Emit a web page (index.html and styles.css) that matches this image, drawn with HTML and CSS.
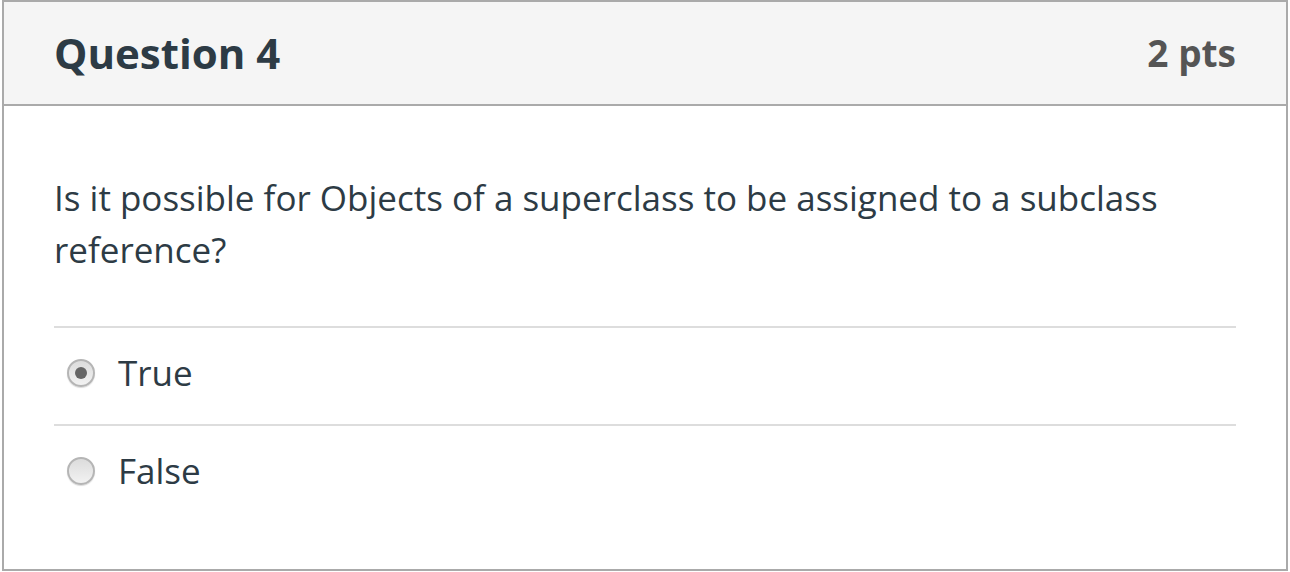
FILE: index.html
```html
<!DOCTYPE html>
<html>
<head>
<meta charset="utf-8">
<link rel="stylesheet" href="styles.css">
</head>
<body>
<div class="question">
  <div class="q-header">
    <h2 class="q-title">Question 4</h2>
    <span class="q-points">2 pts</span>
  </div>
  <div class="q-body">
    <p class="q-text">Is it possible for Objects of a superclass to be assigned to a subclass reference?</p>
    <div class="answers">
      <label class="answer">
        <span class="radio checked"></span>
        <span class="answer-label">True</span>
      </label>
      <label class="answer">
        <span class="radio"></span>
        <span class="answer-label">False</span>
      </label>
    </div>
  </div>
</div>
</body>
</html>
```
FILE: styles.css
```css
html, body {
  margin: 0;
  padding: 0;
  background: #fff;
}
body {
  padding: 0 2px;
  font-family: "Open Sans", "Liberation Sans", sans-serif;
  color: #2d3b45;
}
.question {
  border: 2px solid #aaaaaa;
  height: 571px;
  box-sizing: border-box;
  display: flex;
  flex-direction: column;
}
.q-header {
  background: #f5f5f5;
  border-bottom: 2px solid #aaaaaa;
  height: 104px;
  box-sizing: border-box;
  display: flex;
  align-items: center;
  justify-content: space-between;
  padding: 0 50px 2px 50px;
}
.q-title {
  margin: 0;
  font-size: 42px;
  font-weight: 700;
  color: #2d3b45;
}
.q-points {
  font-size: 37px;
  font-weight: 700;
  color: #555555;
}
.q-body {
  padding: 66px 50px 0 50px;
}
.q-text {
  margin: 0;
  font-size: 35px;
  line-height: 52px;
  color: #2d3b45;
}
.answers {
  margin-top: 50px;
}
.answer {
  display: flex;
  align-items: center;
  height: 98px;
  box-sizing: border-box;
  border-top: 2px solid #dddddd;
  padding: 0 0 7px 13px;
  gap: 23px;
}
.radio {
  width: 28px;
  height: 28px;
  box-sizing: border-box;
  border-radius: 50%;
  border: 2px solid #b5b5b5;
  background: linear-gradient(#dcdcdc, #f2f2f2);
  box-shadow: 0 1px 1px rgba(0,0,0,0.15);
  display: flex;
  align-items: center;
  justify-content: center;
}
.radio.checked::after {
  content: "";
  width: 12px;
  height: 12px;
  border-radius: 50%;
  background: #666666;
}
.answer-label {
  font-size: 35px;
  color: #2d3b45;
}
```
